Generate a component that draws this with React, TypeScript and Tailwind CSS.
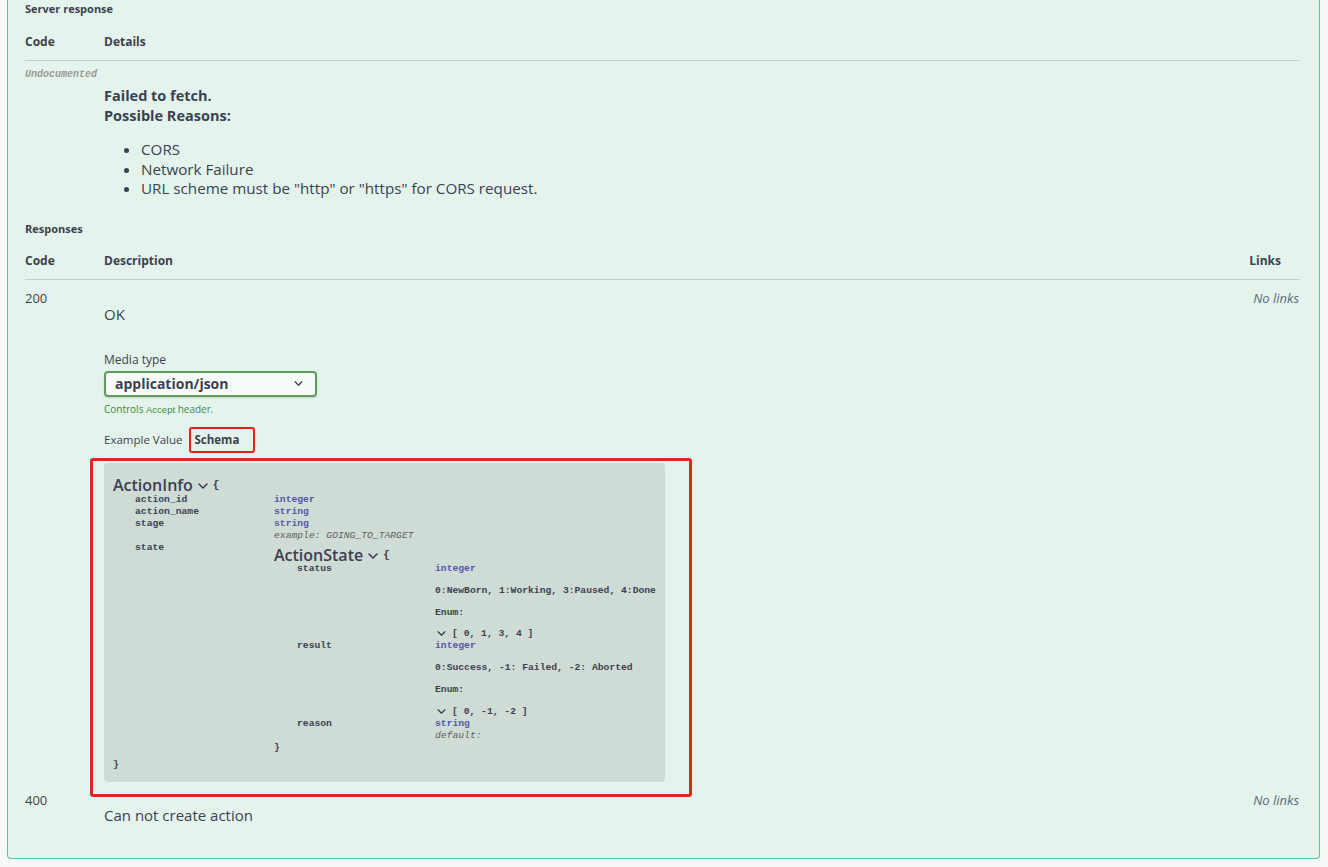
import type { ReactNode } from "react";

const sans = { fontFamily: '"Open Sans", "Liberation Sans", sans-serif' };
const mono = { fontFamily: '"Liberation Mono", monospace' };

function Chevron({ className = "" }: { className?: string }) {
  return (
    <svg viewBox="0 0 10 6" className={className} fill="none" stroke="currentColor" strokeWidth="1.6" strokeLinecap="round" strokeLinejoin="round">
      <path d="M1 1l4 4 4-4" />
    </svg>
  );
}

function Prop({ name, width, children }: { name: string; width: string; children: ReactNode }) {
  return (
    <div className="flex">
      <div className={`${width} shrink-0 font-bold text-[#3b4151]`}>{name}</div>
      <div className="whitespace-nowrap">{children}</div>
    </div>
  );
}

function Type({ children }: { children: ReactNode }) {
  return <div className="font-bold text-[#55a]">{children}</div>;
}

function Desc({ children }: { children: ReactNode }) {
  return <div className="mt-[10px] font-bold text-[#3b4151]">{children}</div>;
}

function ModelTitle({ name, className = "" }: { name: string; className?: string }) {
  return (
    <div className={`flex items-center text-[16px] leading-[16px] font-semibold text-[#3b4151] ${className}`} style={sans}>
      <span>{name}</span>
      <Chevron className="ml-[5px] mt-[2px] h-[6px] w-[10px]" />
      <span className="ml-[5px] text-[11px]" style={mono}>{"{"}</span>
    </div>
  );
}

function SchemaBox() {
  return (
    <div className="rounded-[4px] bg-[#cfdbd5] pl-[9px] pt-[12px] pb-[11px] pr-4">
      <ModelTitle name="ActionInfo" className="h-[18px] mt-[1px]" />
      <div className="text-[9.7px] leading-[12px]" style={mono}>
        <div className="pl-[22px]">
          <Prop name="action_id" width="w-[139px]">
            <Type>integer</Type>
          </Prop>
          <Prop name="action_name" width="w-[139px]">
            <Type>string</Type>
          </Prop>
          <Prop name="stage" width="w-[139px]">
            <Type>string</Type>
            <div className="italic text-[#606060]">example: GOING_TO_TARGET</div>
          </Prop>
          <div className="flex">
            <div className="w-[139px] shrink-0 font-bold text-[#3b4151]">state</div>
            <div className="whitespace-nowrap">
              <ModelTitle name="ActionState" className="mt-[5px] h-[16px]" />
              <div className="pl-[23px]">
                <Prop name="status" width="w-[138px]">
                  <Type>integer</Type>
                  <Desc>0:NewBorn, 1:Working, 3:Paused, 4:Done</Desc>
                  <Desc>Enum:</Desc>
                  <div className="mt-[9px] flex items-center font-bold text-[#3b4151]">
                    <Chevron className="ml-[2px] mr-[6px] h-[5px] w-[9px]" />
                    <span>[ 0, 1, 3, 4 ]</span>
                  </div>
                </Prop>
                <Prop name="result" width="w-[138px]">
                  <Type>integer</Type>
                  <Desc>0:Success, -1: Failed, -2: Aborted</Desc>
                  <Desc>Enum:</Desc>
                  <div className="mt-[10px] flex items-center font-bold text-[#3b4151]">
                    <Chevron className="ml-[2px] mr-[6px] h-[5px] w-[9px]" />
                    <span>[ 0, -1, -2 ]</span>
                  </div>
                </Prop>
                <Prop name="reason" width="w-[138px]">
                  <Type>string</Type>
                  <div className="italic text-[#606060]">default:</div>
                </Prop>
              </div>
              <div className="font-bold text-[#3b4151]">{"}"}</div>
            </div>
          </div>
        </div>
        <div className="mt-[5px] font-bold text-[#3b4151]">{"}"}</div>
      </div>
    </div>
  );
}

function TableHead({ right }: { right?: string }) {
  return (
    <div className="mr-[19px] flex border-b border-[#c5d2cc] pb-[10px] text-[12px] font-bold leading-[16px] text-[#3b4151]">
      <div className="w-[79px] shrink-0">Code</div>
      <div className="flex-1">{right ? "Description" : "Details"}</div>
      {right && <div className="pr-[19px]">{right}</div>}
    </div>
  );
}

export default function App() {
  return (
    <div className="min-h-screen bg-[#f6f9f7] pb-[9px]" style={sans}>
      <div className="ml-[7px] w-[1313px] rounded-b-[4px] border border-t-0 border-[#5bc595] bg-[#e4f4ec] pl-[17px] pb-[33px] text-[#3b4151]">
        <div className="pt-[2px] text-[11px] font-bold leading-[14px]">Server response</div>

        <div className="mt-[18px]">
          <TableHead />
        </div>

        <div className="mt-[8px] text-[10px] font-bold italic leading-[12px] text-[#9a9a9a]" style={mono}>
          Undocumented
        </div>
        <div className="pl-[79px] mt-[5px]">
          <div className="text-[14.5px] font-bold leading-[20px]">Failed to fetch.</div>
          <div className="text-[14.5px] font-bold leading-[20px]">Possible Reasons:</div>
          <ul className="mt-[14px] list-disc pl-[37px] text-[15.2px] leading-[19.5px]">
            <li>CORS</li>
            <li>Network Failure</li>
            <li>URL scheme must be "http" or "https" for CORS request.</li>
          </ul>
        </div>

        <div className="mt-[23px] text-[11px] font-bold leading-[14px]">Responses</div>

        <div className="mt-[17px]">
          <TableHead right="Links" />
        </div>

        <div className="mt-[10px] flex pr-[20px]">
          <div className="w-[79px] shrink-0 text-[13px] leading-[16px]">200</div>
          <div className="flex-1 pt-[14px]">
            <div className="text-[15px] leading-[20px]">OK</div>
            <div className="mt-[28px] text-[12px] leading-[16px]">Media type</div>
            <div className="mt-[3px] flex h-[26px] w-[213px] items-center justify-between rounded-[4px] border-2 border-[#5d9e5d] bg-[#f7fbf8] pl-[9px] pr-[12px] shadow-[0_1px_2px_rgba(0,0,0,0.15)]">
              <span className="text-[14px] font-bold">application/json</span>
              <Chevron className="h-[5px] w-[9px] text-[#3b4151]" />
            </div>
            <div className="mt-[5px] text-[10px] leading-[14px] text-[#3d8b3d]">
              Controls <span style={{ fontFamily: '"Liberation Sans", sans-serif' }} className="text-[9.5px]">Accept</span> header.
            </div>
            <div className="mt-[10px] flex h-[26px] items-center text-[11.5px]">
              <span>Example Value</span>
              <span className="ml-[6px] flex h-[26px] items-center rounded-[3px] border-2 border-[#e0241c] pl-[4px] pr-[14px] font-bold">Schema</span>
            </div>
            <div className="-ml-[14px] mt-[5px] w-[602px] rounded-[3px] border-[3px] border-[#e3271d] pl-[11px] pt-[2px] pr-[24px] pb-[12px]">
              <SchemaBox />
            </div>
          </div>
          <div className="text-[13px] italic leading-[16px] text-[#606878]">No links</div>
        </div>

        <div className="-mt-[5px] flex pr-[20px]">
          <div className="w-[79px] shrink-0 text-[13px] leading-[16px]">400</div>
          <div className="flex-1 pt-[13px]">
            <div className="text-[15px] leading-[20px]">Can not create action</div>
          </div>
          <div className="text-[13px] italic leading-[16px] text-[#606878]">No links</div>
        </div>
      </div>
    </div>
  );
}
